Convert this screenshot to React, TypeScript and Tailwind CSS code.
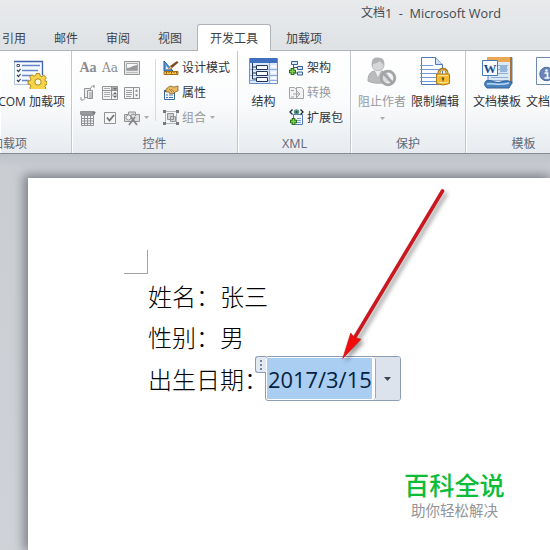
import type { ReactNode } from 'react';

const sans = "font-['Open_Sans','Noto_Sans_CJK_SC',sans-serif]";

function Group({ label, className, children, labelClass = 'justify-center' }: { label: string; className: string; children: ReactNode; labelClass?: string }) {
  return (
    <section className={`flex shrink-0 flex-col overflow-hidden border-r border-[#c3c8cf] pt-1 shadow-[inset_1px_0_0_#fff] ${className}`}>
      <div className="flex h-[75px] shrink-0">{children}</div>
      <div className={`flex h-[22px] items-center pt-[5px] text-[#606a78] ${labelClass}`}>{label}</div>
    </section>
  );
}

function Big({ icon, label, className = '', disabled = false, caret = false }: { icon: ReactNode; label: string; className?: string; disabled?: boolean; caret?: boolean }) {
  return (
    <div className={`flex shrink-0 flex-col items-center pt-[2px] ${disabled ? 'text-[#969a9f]' : ''} ${className}`}>
      <div className="flex h-9 items-start">{icon}</div>
      <span className="h-[18px] leading-[18px]">{label}</span>
      {caret && <Caret className="mt-[6px]" />}
    </div>
  );
}

function Small({ icon, label, disabled = false, caret = false }: { icon: ReactNode; label: string; disabled?: boolean; caret?: boolean }) {
  return (
    <div className={`flex h-[25px] items-center gap-[3px] ${disabled ? 'text-[#969a9f]' : ''}`}>
      {icon}
      <span className="pt-px">{label}</span>
      {caret && <Caret className="ml-px" />}
    </div>
  );
}

function Caret({ className = '' }: { className?: string }) {
  return (
    <svg className={className} width="5" height="3" viewBox="0 0 5 3">
      <path d="M0 0h5L2.500 3z" fill="#a9adb3" />
    </svg>
  );
}

const ComIcon = () => (
  <svg width="34" height="32" viewBox="0 0 34 32">
    <path d="M1.500 4.500h28v23h-28z" fill="#f6f9fe" stroke="#b7c5dc" />
    <path d="M1 4.500h29M29.500 4v14" stroke="#3f62ac" strokeWidth="1.300" />
    <path d="M9 8.500h18M9 13.500h16M9 18.500h10M9 23.500h7" stroke="#6687c6" strokeWidth="1.300" />
    <path d="M4 7.500h2.500v2H4z" fill="none" stroke="#47597c" />
    <path d="M4 13l1.500 1.500L7.500 12M4 18l1.500 1.500L7.500 17M4 23l1.500 1.500L7.500 22" fill="none" stroke="#333c50" strokeWidth="1.200" />
    <path d="M23.300 16.500h3.400l.5 2.500 1.600.7 2.100-1.400 2.400 2.400-1.400 2.100.7 1.600 1.400.4v2.600l-1.500.5-.6 1.600 1 1.600-1.500 1.400H18l-1.300-1.400 1.200-2-.6-1.500-2.300-.5v-3l2.300-.5.7-1.500-1.400-2 2.300-2.300 2.100 1.400 1.600-.7z" fill="#f7d448" stroke="#b0871b" />
    <circle cx="25" cy="25" r="3.200" fill="#fffbe2" stroke="#b0871b" />
  </svg>
);

const AaIcon = ({ rich = false }: { rich?: boolean }) => (
  <span className={`leading-none text-[#898b8e] ${rich ? "font-['Liberation_Serif',serif] text-[14px] font-bold" : "font-['DejaVu_Serif',serif] text-[12px]"}`}>Aa</span>
);

const G = ({ children }: { children: ReactNode }) => (
  <svg width="16" height="16" viewBox="0 0 16 16" fill="none" stroke="#919397">
    {children}
  </svg>
);

const PictureIcon = () => (
  <G><path d="M.5 1.500h15v13H.5z" fill="#e9e9ea" /><path d="M2.500 3.500h11v7h-11z" fill="#f8f8f8" stroke="#a9abad" /><path d="M3 10V8l3-.5 3-1.500L13 5v5z" fill="#98999c" stroke="none" /><path d="M2 12.500h12" stroke="#bbb" /></G>
);
const BlocksIcon = () => (
  <G><path d="M4.500 3.500h6v9h-6z" fill="#eee" /><path d="M7.500 5.500h5v8h-5z" fill="#eee" /><path d="M9 8h3M9 10h3M9 12h3M11 3c0-2 2-2 2-2h1.500M14 0v3M5 12c0 3-2 3-2 3H1M1 12v3" /></G>
);
const ComboIcon = () => (
  <G><path d="M.5 1.500h15v13H.5z" fill="#f4f4f4" /><path d="M9.500 1v14M1 5.500h15M10 10h6" /><path d="M2 3.500h6M2 7.500h6M2 9.500h6M2 11.500h6" stroke="#acaeb1" /><path d="M10 2h5v3h-5z" fill="#a8aaac" stroke="none" /><path d="M11 3h4l-2 2zM11 9l2-2 2 2zM11 11h4l-2 2z" fill="#686a6d" stroke="none" /></G>
);
const DropIcon = () => (
  <G><path d="M.5 2.500h15v11H.5z" fill="#f4f4f4" /><path d="M9.500 3v10" /><path d="M2 5.500h6M2 7.500h6M2 9.500h6M2 11.500h5" stroke="#9da0a3" /><path d="M11 6.500l1.500-2 1.500 2zM11 9.500h3l-1.500 2z" fill="#727477" stroke="none" /></G>
);
const DateIcon = () => (
  <G><path d="M1.500 5.500h12v10h-12z" fill="#f5f5f5" /><path d="M.5 1.500h14v3H.5z" fill="#999b9e" /><path d="M12 2h4l-2 2.500z" fill="#77797c" stroke="none" /><path d="M2 8.500h11M2 11h11M2 13.500h11M4.500 6v9M7.500 6v9M10.500 6v9" /></G>
);
const CheckIcon = () => (
  <G><path d="M2.500 2.500h11v11h-11z" fill="#f7f7f7" /><path d="M5 7.500L7.500 10.500 12 5" stroke="#727477" strokeWidth="1.800" /></G>
);
const LegacyIcon = () => (
  <G><path d="M.5 4.500h4V2h7v2.500h4v7H.5z" fill="#dddedf" /><circle cx="4.500" cy="7.500" r="2.500" fill="#f4f4f4" /><path d="M5 15l6-8M7 7l6 8" stroke="#85878a" strokeWidth="1.800" /><path d="M7 7c-1-3 3-4 5-1" stroke="#85878a" /></G>
);

const DesignIcon = () => (
  <svg width="16" height="16" viewBox="0 0 16 16">
    <path d="M1 1v10h9z" fill="#5c9bdd" stroke="#235c9e" /><path d="M3 6v3h3z" fill="#eef7ff" />
    <path d="M5 10l2-4 7-5 1.500 1.500L8 9z" fill="#7c4b2a" /><path d="M5 10l2.500-4L9 8z" fill="#e4b46d" />
    <path d="M1 11.500h14v3H1z" fill="#ffc545" stroke="#a76b16" /><path d="M3.500 12v1.500M6 12v1M8.500 12v1.500M11 12v1M13.500 12v1.500" stroke="#765116" />
  </svg>
);
const PropertyIcon = () => (
  <svg width="16" height="16" viewBox="0 0 16 16">
    <path d="M1.500 5.500h10v9h-10z" fill="#f4f8fe" stroke="#3766a7" /><path d="M1 5h11v2H1z" fill="#3766a7" />
    <path d="M3 10h2M6 10h4M3 12.500h2M6 12.500h4" stroke="#4577b7" />
    <path d="M3 4l4-3 4 1 4-1v5l-3 1-2 2-1-1-2 1-1-2H3z" fill="#e4b961" stroke="#8b652e" strokeWidth=".8" /><path d="M8 4l3 3M6 4l3 3" stroke="#8b652e" strokeWidth=".7" />
  </svg>
);
const GroupIcon = () => (
  <G><path d="M2.500 1.500h11v12h-11z" stroke="#b5b7ba" /><path d="M4.500 3.500h6v6h-6zM7.500 6.500h5v5h-5z" fill="#d2d3d5" /><path d="M0 0h3v3H0zM13 0h3v3h-3zM0 12h3v3H0zM13 12h3v3h-3z" fill="#77797c" stroke="none" /></G>
);

const StructureIcon = () => (
  <svg width="29" height="29" viewBox="0 0 29 29">
    <path d="M.5 1.500h28v25H.5z" fill="#dce9fa" stroke="#6b8fc8" /><path d="M1 1h27v5H1z" fill="#416fc0" />
    <path d="M20.500 6v20M1 12.500h27M1 18.500h27M1 23.500h27" stroke="#8fb0df" />
    <path d="M3.500 6v16H8M3.500 10H8M3.500 16H8" fill="none" stroke="#253858" />
    <path d="M7.500 8.500h11v4h-11zM7.500 14.500h11v4h-11zM7.500 20.500h11v4h-11z" fill="#f8fbff" stroke="#253858" />
    <path d="M22 9.500h5M22 15.500h5M22 21h5M22 25h5" stroke="#fff" strokeWidth="2" />
  </svg>
);
const Plus = () => <><path d="M3.500 8v7M0 11.500h7" stroke="#24731e" strokeWidth="3.600" /><path d="M3.500 9v5M1 11.500h5" stroke="#83d04f" strokeWidth="1.600" /></>;
const SchemaIcon = () => (
  <svg width="15" height="16" viewBox="0 0 15 16">
    <path d="M4.500 3v10H9M4.500 7.500H9" fill="none" stroke="#415473" /><path d="M2.500 1.500h6v3h-6zM8.500 6.500h5v3h-5zM8.500 12h5v3h-5z" fill="#dce9fc" stroke="#345f9d" /><Plus />
  </svg>
);
const TransformIcon = () => (
  <svg width="15" height="16" viewBox="0 0 15 16" fill="#f3f3f3" stroke="#a2a4a7">
    <path d="M.5 2.500h5l2 2v9h-7zM7.500 2.500h5l2 2v9h-7z" /><path d="M4 9h6M8 6l3 3-3 3M2 5.500h3M2 12h3" fill="none" />
  </svg>
);
const ExpansionIcon = () => (
  <svg width="15" height="17" viewBox="0 0 15 17">
    <path d="M4.500 5.500h9v10h-9z" fill="#f4f8ff" stroke="#517bb8" /><path d="M8 9.500h4M8 11.500h4M8 13.500h4" stroke="#7aa0d5" />
    <path d="M3.500.5L1 3l2.500 2.500M11.500.5L14 3l-2.500 2.500" fill="none" stroke="#252d38" strokeWidth="1.300" /><circle cx="7.500" cy="3" r="2.700" fill="#559885" /><circle cx="7.500" cy="3" r="1" fill="#204b44" /><g transform="translate(1 1)"><Plus /></g>
  </svg>
);
const BlockIcon = () => (
  <svg width="30" height="32" viewBox="0 0 30 32">
    <circle cx="11" cy="8" r="6" fill="#d6d7d9" stroke="#b4b6b9" /><path d="M5 8C4 2 7 .5 11 .5c5 0 7 3 6 7.500-2-1-3-3-4-4-2 2-5 2-8 4z" fill="#b0b2b5" />
    <path d="M1 24c0-6 2-9 6-10l4 4 4-4c5 1 7 4 7 10-6 3-15 3-21 0z" fill="#b9bbbd" stroke="#a7a9ac" /><path d="M8 14l3 6 3-6" fill="#eee" />
    <circle cx="21" cy="21" r="6.800" fill="#ededee" fillOpacity=".65" stroke="#a2a4a7" strokeWidth="2.800" /><path d="M16.500 16l9 10" stroke="#a2a4a7" strokeWidth="2.800" />
  </svg>
);
const LockIcon = () => (
  <svg width="30" height="32" viewBox="0 0 30 32">
    <path d="M1.500.5h14l7 7v20h-21z" fill="#fbfdff" stroke="#4b79b8" /><path d="M15.500.5v7h7" fill="#c9def7" stroke="#4b79b8" />
    <path d="M0 8.500h13M0 12.500h19M0 16.500h19M0 20.500h17M0 24.500h16" stroke="#7498d2" />
    <path d="M19 17v-1c0-5 8-5 8 0v2" fill="none" stroke="#a27927" strokeWidth="3" /><path d="M19 17v-1c0-4 8-4 8 0v2" fill="none" stroke="#f5dc80" />
    <path d="M16.500 17h13v9.500q-6.500 3-13 0z" fill="#f4bd36" stroke="#b47a18" /><path d="M18 18.500h10M18 25.500h10" stroke="#ffe58a" /><circle cx="23" cy="21.500" r="1.300" fill="#725019" /><path d="M23 21.500v3" stroke="#725019" />
  </svg>
);
const WordIcon = () => (
  <svg width="31" height="33" viewBox="0 0 31 33">
    <path d="M6 .5h24v26l-2 2H6z" fill="#dbe8f8" stroke="#5a83b8" /><path d="M5 0h25v5H5z" fill="#e9a753" /><path d="M28 0h2v26h-2z" fill="#a87135" />
    <path d="M15 8.500h11M15 12.500h11M15 16.500h11M9 20.500h17M9 23.500h17" stroke="#90afd5" /><path d="M18 8h7v7h-7z" fill="#94b4d9" />
    <path d="M4 24c6-2 9 3 15 1s8-1 11 0l-3 6H5c-3-2-3-5-1-7z" fill="#4d83bd" stroke="#325f98" /><path d="M5 27c7-1 12 2 22-1" fill="none" stroke="#b5dafa" strokeWidth="1.500" />
    <path d="M.5 3.500h15v15H.5z" fill="#f9fbff" stroke="#447bb8" /><text x="1.500" y="15.500" className="font-['Liberation_Serif',serif]" fontSize="13" fontWeight="bold" fill="#1d4e91">W</text>
  </svg>
);
const InfoIcon = () => (
  <svg width="28" height="32" viewBox="0 0 28 32">
    <path d="M.5.5h19l7 7v20H.5z" fill="#f9fcff" stroke="#7188ae" /><circle cx="10.500" cy="17" r="6.700" fill="#6886b9" stroke="#4f6798" />
    <circle cx="10.500" cy="13.500" r="1.300" fill="#fff" /><path d="M8.500 16h3v5M8.500 21h5" fill="none" stroke="#fff" strokeWidth="1.700" />
  </svg>
);

function Ribbon() {
  return (
    <div className="flex h-[103px] w-[550px] overflow-hidden border-b border-[#858b93] bg-linear-to-b from-white via-[#fafbfc] to-[#e7ebef]">
      <Group label="加载项" className="w-[72px]" labelClass="justify-end pr-[44px] whitespace-nowrap">
        <div className="flex w-full flex-col items-end pt-[2px]">
          <div className="mr-6 h-9"><ComIcon /></div>
          <span className="mr-[6px] h-[18px] whitespace-nowrap leading-[18px]">COM 加载项</span>
        </div>
      </Group>
      <Group label="控件" className="w-[166px]">
        <div className="grid h-[75px] grid-cols-[22px_22px_22px] grid-rows-3 items-center justify-items-center pl-[5px]">
          <AaIcon rich /><AaIcon /><PictureIcon />
          <BlocksIcon /><ComboIcon /><DropIcon />
          <DateIcon /><CheckIcon /><LegacyIcon />
        </div>
        <Caret className="mt-[61px] ml-px" />
        <div className="mt-1 ml-[6px] h-[62px] w-px bg-[#d8dade]" />
        <div className="ml-[7px]">
          <Small icon={<DesignIcon />} label="设计模式" />
          <Small icon={<PropertyIcon />} label="属性" />
          <Small icon={<GroupIcon />} label="组合" disabled caret />
        </div>
      </Group>
      <Group label="XML" className="w-[113px]" labelClass="justify-center pl-px text-[12.500px]">
        <Big icon={<StructureIcon />} label="结构" className="ml-[11px] text-[12px]" />
        <div className="ml-[11px]">
          <Small icon={<SchemaIcon />} label="架构" />
          <Small icon={<TransformIcon />} label="转换" disabled />
          <Small icon={<ExpansionIcon />} label="扩展包" />
        </div>
      </Group>
      <Group label="保护" className="w-[115px]">
        <Big icon={<BlockIcon />} label="阻止作者" className="ml-[7px]" disabled caret />
        <Big icon={<LockIcon />} label="限制编辑" className="ml-[5px]" />
      </Group>
      <Group label="模板" className="w-[116px]">
        <Big icon={<WordIcon />} label="文档模板" className="ml-[7px]" />
        <Big icon={<InfoIcon />} label="文档面板" className="ml-[5px]" />
      </Group>
    </div>
  );
}

function DateControl() {
  return (
    <div className="relative flex h-[45px] w-[136px] rounded-[3px] border border-[#8c9db5] bg-white">
      <div className="flex h-[43px] w-[110px] items-center rounded-r-[3px] border-r border-[#9aa9be] p-px">
        <div className="flex h-[41px] w-[105px] items-center bg-[#aacdf2] pl-px pt-[3px] text-[21.900px] text-[#05213f]">2017/3/15</div>
      </div>
      <div className="flex grow items-center justify-center rounded-r-[2px] bg-[#dce3ed] pr-px">
        <svg width="7" height="4" viewBox="0 0 7 4"><path d="M0 0h7L3.500 4z" fill="#3e4652" /></svg>
      </div>
      <div className="absolute -top-px -left-[11px] flex h-[17px] w-[11px] flex-col items-center justify-center gap-[2px] rounded-l-[3px] border border-r-0 border-[#8c9db5] bg-[#e3e9f1]">
        <i className="size-[2px] bg-[#7184a1]" /><i className="size-[2px] bg-[#7184a1]" /><i className="size-[2px] bg-[#7184a1]" />
      </div>
    </div>
  );
}

function Arrow() {
  return (
    <svg className="absolute top-[180px] left-[325px] drop-shadow-[3px_3px_2px_rgba(0,0,0,0.38)]" width="130" height="190" viewBox="325 180 130 190">
      <path d="M442.500 191L355 337" stroke="#c91820" strokeWidth="3.600" strokeLinecap="round" />
      <path d="M342.700 358.500L350.700 333L354.500 337.500L361 339.300z" fill="#f20b0b" stroke="#bd1116" strokeWidth=".6" />
    </svg>
  );
}

export default function App() {
  return (
    <main className={`relative h-[550px] w-[550px] overflow-hidden bg-[#c9cdd3] text-[12px] leading-[18px] text-[#30343a] ${sans}`}>
      <header className="flex h-[51px] flex-col border-b border-[#afb4ba] bg-linear-to-b from-[#e8eaec] to-[#dfe2e5]">
        <div className="flex h-6 shrink-0 items-center pt-px pl-[361px] whitespace-pre text-[#44484e]">文档<span className="text-[12.700px]">1  -  Microsoft Word</span></div>
        <nav className="flex h-[27px] shrink-0 items-start text-[#3e4247]">
          <span className="ml-[2px] w-[52px] pt-[6px]">引用</span>
          <span className="w-[52px] pt-[6px]">邮件</span>
          <span className="w-[52px] pt-[6px]">审阅</span>
          <span className="w-[39px] pt-[6px]">视图</span>
          <span className="flex h-[27px] w-[74px] justify-center rounded-t-[3px] border border-b-0 border-[#afb4ba] bg-white pt-[5px]">开发工具</span>
          <span className="ml-[15px] pt-[6px]">加载项</span>
        </nav>
      </header>
      <Ribbon />
      <div className="h-[396px] bg-linear-to-b from-[#bfc3c9] via-[#cacdd2] via-[14px] to-[#cfd2d7] pt-6 pl-7">
        <article className="h-[372px] w-[522px] bg-white pt-[72px] pl-[96px] shadow-[-2px_-1px_10px_2px_rgba(80,83,92,0.65)]">
          <div className="h-6 w-6 border-r border-b border-[#a1a3a7]" />
          <div className="ml-6 pt-px font-['Noto_Sans_CJK_SC',sans-serif] text-[24px] font-light text-black">
            <p className="flex h-[41px] items-center">姓名：张三</p>
            <p className="flex h-[41px] items-center">性别：男</p>
            <div className="flex h-[43px] items-center">
              <span className="w-[117px] shrink-0 whitespace-nowrap">出生日期：</span>
              <div className={`font-normal ${sans}`}><DateControl /></div>
            </div>
          </div>
          <div className="mt-[70px] ml-[280px] w-[102px]">
            <div className="h-[31px] text-[25.200px] leading-[31px] font-medium whitespace-nowrap text-[#0dbc38]">百科全说</div>
            <div className="pl-[7px] text-[14.500px] leading-[19px] whitespace-nowrap text-[#929497]">助你轻松解决</div>
          </div>
        </article>
      </div>
      <Arrow />
    </main>
  );
}
